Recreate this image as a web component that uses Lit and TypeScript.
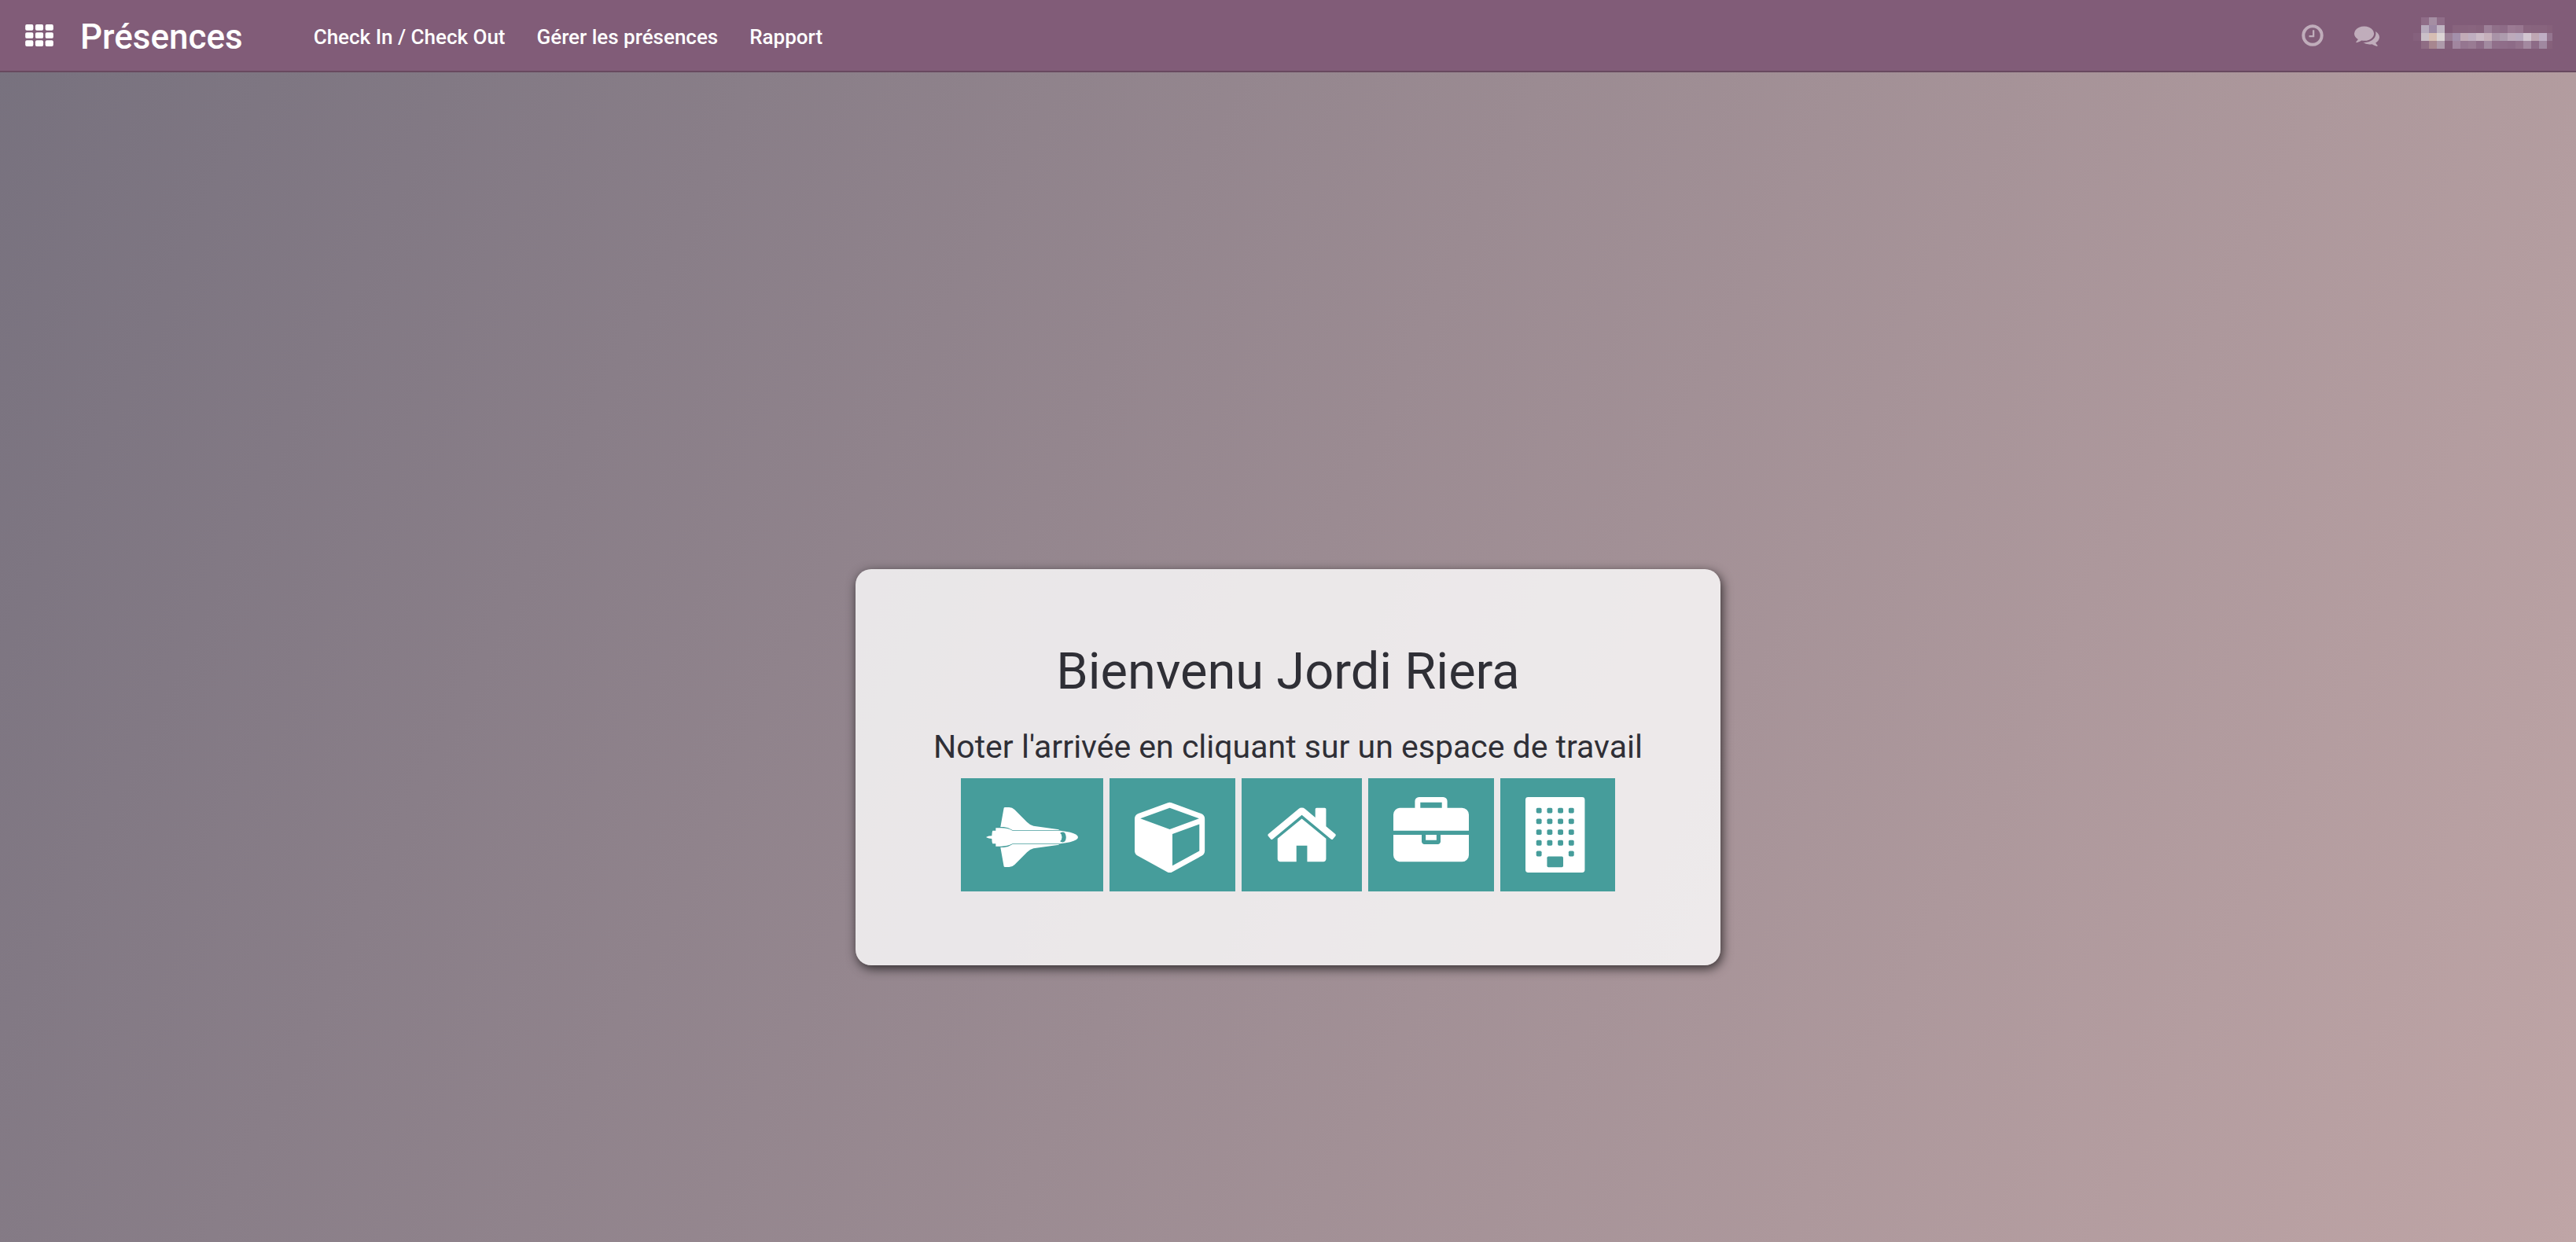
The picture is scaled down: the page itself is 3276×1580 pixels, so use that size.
import { LitElement, html, css, svg } from "lit";
import { customElement } from "lit/decorators.js";

const HOME = "M1472 992v480q0 26-19 45t-45 19h-384v-384h-256v384h-384q-26 0-45-19t-19-45v-480q0-1 .5-3t.5-3l575-474 575 474q1 2 1 6zm223-69l-62 74q-8 9-21 11h-3q-13 0-21-7l-692-577-692 577q-12 8-24 7-13-2-21-11l-62-74q-8-10-7-23.5t11-21.5l719-599q32-26 76-26t76 26l244 204v-195q0-14 9-23t23-9h192q14 0 23 9t9 23v408l219 182q10 8 11 21.5t-7 23.5z";
const CUBE = "M896 1629l640-349v-636l-640 233v752zm-64-865l698-254-698-254-698 254zm832-252v768q0 35-18 65t-49 47l-704 384q-28 16-61 16t-61-16l-704-384q-31-17-49-47t-18-65v-768q0-40 23-73t61-47l704-256q22-8 44-8t44 8l704 256q38 14 61 47t23 73z";
const BRIEFCASE = "M640 256h512v-128h-512v128zm1152 640v480q0 66-47 113t-113 47h-1472q-66 0-113-47t-47-113v-480h672v160q0 26 19 45t45 19h320q26 0 45-19t19-45v-160h672zm-768 0v128h-256v-128h256zm768-480v384h-1792v-384q0-66 47-113t113-47h352v-160q0-40 28-68t68-28h576q40 0 68 28t28 68v160h352q66 0 113 47t47 113z";
const CLOCK = "M1024 544v448q0 14-9 23t-23 9h-320q-14 0-23-9t-9-23v-64q0-14 9-23t23-9h224v-352q0-14 9-23t23-9h64q14 0 23 9t9 23zm416 352q0-148-73-273t-198-198-273-73-273 73-198 198-73 273 73 273 198 198 273 73 273-73 198-198 73-273zm224 0q0 209-103 385.5t-279.5 279.5-385.5 103-385.5-103-279.5-279.5-103-385.5 103-385.5 279.5-279.5 385.5-103 385.5 103 279.5 279.5 103 385.5z";
const COMMENTS = "M1408 768q0 139-94 257t-256.5 186.5-353.5 68.5q-86 0-176-16-124 88-278 128-36 9-86 16h-3q-11 0-20.5-8t-11.5-21q-1-3-1-6.5t.5-6.5 2-6l2.5-5 3.5-5.5 4-5 4.5-5 4-4.5q5-6 23-25t26-29.5 22.5-29 25-38.5 20.5-44q-124-72-195-177t-71-224q0-139 94-257t256.5-186.5 353.5-68.5 353.5 68.5 256.5 186.5 94 257zm384 256q0 120-71 224.5t-195 176.5q10 24 20.5 44t25 38.5 22.5 29 26 29.5 23 25q1 1 4 4.5t4.5 5 4 5 3.5 5.5l2.5 5 2 6 .5 6.5-1 6.5q-3 14-13 22t-22 7q-50-7-86-16-154-40-278-128-90 16-176 16-271 0-472-132 58 4 88 4 161 0 309-45t264-129q125-92 192-212t67-254q0-77-23-152 129 71 204 178t75 230z";

const appsIcon = html`<svg class="apps-icon" viewBox="0 0 1792 1408" aria-hidden="true">
  ${[0, 1, 2].map((r) => [0, 1, 2].map((c) => svg`<rect x=${c * 640} y=${r * 512} width="512" height="384" rx="96" />`))}
</svg>`;

const shuttle = html`<svg class="glyph" viewBox="162 132 350 288" aria-hidden="true">
  <path d="M217 246L230 173Q231 171 234 171H250Q262 171 271 180L318 227Q330 239 343 242L440 256L440 258H263Q247 247 230 246Z" />
  <path d="M217 324L230 397Q231 399 234 399H250Q262 399 271 390L318 343Q330 331 343 328L440 314L440 312H263Q247 323 230 324Z" />
  <path d="M199 250H220Q243 250 263 260H445Q490 265 506 275Q513 280 513 285Q513 290 506 295Q490 305 445 310H263Q243 320 220 320H199V310H187Q184 304 184 291Q172 291 163 286V284Q172 280 184 280Q184 266 187 260H199Z" />
  <path class="cut" d="M446 268Q456 263 463 269Q472 285 463 301Q456 307 446 302Q443 299 449 296Q454 285 449 274Q443 271 446 268Z" />
</svg>`;

const building = html`<svg class="glyph" viewBox="0 0 1536 1792" aria-hidden="true">
  <rect width="1408" height="1792" rx="64" />
  ${[0, 1, 2, 3, 4].map((r) =>
    [0, 1, 2, 3]
      .filter((c) => r < 4 || c === 0 || c === 3)
      .map((c) => svg`<rect class="cut" x=${256 + c * 256} y=${256 + r * 256} width="128" height="128" rx="32" />`)
  )}
  <rect class="cut" x="512" y="1408" width="384" height="256" rx="32" />
</svg>`;

const glyph = (box: string, d: string) =>
  html`<svg class="glyph" viewBox=${box} aria-hidden="true"><path d=${d} /></svg>`;

const WORKSPACES = [
  { label: "Navette", icon: shuttle },
  { label: "Entrepôt", icon: glyph("0 0 1792 1792", CUBE) },
  { label: "Domicile", icon: glyph("64 0 1664 1792", HOME) },
  { label: "Client", icon: glyph("0 0 1792 1792", BRIEFCASE) },
  { label: "Bureau", icon: building },
];

// Pixelated avatar and user name: one colour per 10px cell, "-" for an empty cell.
const MOSAIC = [
  "- 8f6d88 a58ea3 8f6d88",
  "- b7abbd 9d89a5 c0b4c2 - 88647e 88647e 89657f 87637d 9d8098 907089 8e6c87 9b7a93 987790 89657f 88647e 88647e 86617b",
  "85617d cac0c8 d6bdb3 dcd4d5 9b7f96 a390ab c2abb7 bfaec0 cbbac6 c6b0bb a993a7 ad9bad bdaabb b9aabf d2c6d1 bfa7b3 bfaec4 957690",
  "- 8f6d84 a7868f ad9aaa 84607b a1869f 957690 997b93 8e6c88 a28aa0 906f8a 8f6d89 8d6b87 93728c a389a0 8d6b87 a088a0 86617b",
].map((row) => row.split(" "));

const userMosaic = html`<svg class="user" viewBox="0 0 177 46" shape-rendering="crispEdges" aria-hidden="true">
  ${MOSAIC.map((row, y) =>
    row.map((c, x) => (c === "-" ? null : svg`<rect x=${x * 10} y=${y * 10} width="10" height="10" fill=${"#" + c} />`))
  )}
</svg>`;

@customElement("app-root")
export class AppRoot extends LitElement {
  static styles = css`
    :host {
      display: flex;
      flex-direction: column;
      min-height: 100vh;
      font-family: Roboto, "Liberation Sans", sans-serif;
      color: #2f2f36;
      background: linear-gradient(115deg, #77717e, #bfa5a6);
    }
    .bar {
      display: flex;
      align-items: center;
      height: 90px;
      padding: 0 30px 0 32px;
      background: #815c78;
      border-bottom: 2px solid #68495f;
      color: #fff;
    }
    button {
      border: 0;
      background: none;
      color: inherit;
      font: inherit;
      padding: 0;
      cursor: pointer;
    }
    svg { display: block; fill: currentColor; }
    a { color: inherit; text-decoration: none; }
    .apps-icon { width: 36px; height: 28px; }
    .brand, .menu { padding-top: 3px; font-weight: 500; }
    .brand { margin-left: 34px; font-size: 44px; }
    .menu { display: flex; gap: 40px; margin-left: 90px; font-size: 26px; }
    .tray { display: flex; align-items: center; gap: 37px; margin-left: auto; color: #c0adbb; }
    .tray-icon { width: 32px; height: 32px; }
    .user { width: 177px; height: 46px; margin-left: 6px; }
    .main { flex: 1; display: grid; place-items: center; padding-top: 280px; box-sizing: border-box; }
    .card {
      box-sizing: border-box;
      width: 1100px;
      max-width: 100%;
      padding: 94px 60px;
      border-radius: 20px;
      background: rgba(255, 255, 255, 0.8);
      box-shadow: 2px 4px 14px rgba(0, 0, 0, 0.7);
      text-align: center;
    }
    h1 { margin: 0 0 38px; font-size: 65px; line-height: 72px; font-weight: 400; }
    h2 { margin: 0 0 18px; font-size: 41px; line-height: 44px; font-weight: 400; }
    .spaces { display: flex; justify-content: center; gap: 8px; }
    .space { padding: 24px 32px; background: #469d9b; color: #fff; }
    .glyph { height: 96px; }
    .cut { fill: #469d9b; }
  `;

  render() {
    return html`
      <header class="bar">
        <button aria-label="Applications">${appsIcon}</button>
        <a class="brand" href="#">Présences</a>
        <nav class="menu">
          <a href="#">Check In / Check Out</a>
          <a href="#">Gérer les présences</a>
          <a href="#">Rapport</a>
        </nav>
        <div class="tray">
          <button aria-label="Activités"><svg class="tray-icon" viewBox="0 0 1792 1792"><path d=${CLOCK} /></svg></button>
          <button aria-label="Discussions"><svg class="tray-icon" viewBox="0 0 1792 1792"><path d=${COMMENTS} /></svg></button>
          <button aria-label="Utilisateur">${userMosaic}</button>
        </div>
      </header>
      <main class="main">
        <section class="card">
          <h1>Bienvenu Jordi Riera</h1>
          <h2>Noter l'arrivée en cliquant sur un espace de travail</h2>
          <div class="spaces">
            ${WORKSPACES.map((w) => html`<button class="space" aria-label=${w.label}>${w.icon}</button>`)}
          </div>
        </section>
      </main>
    `;
  }
}
